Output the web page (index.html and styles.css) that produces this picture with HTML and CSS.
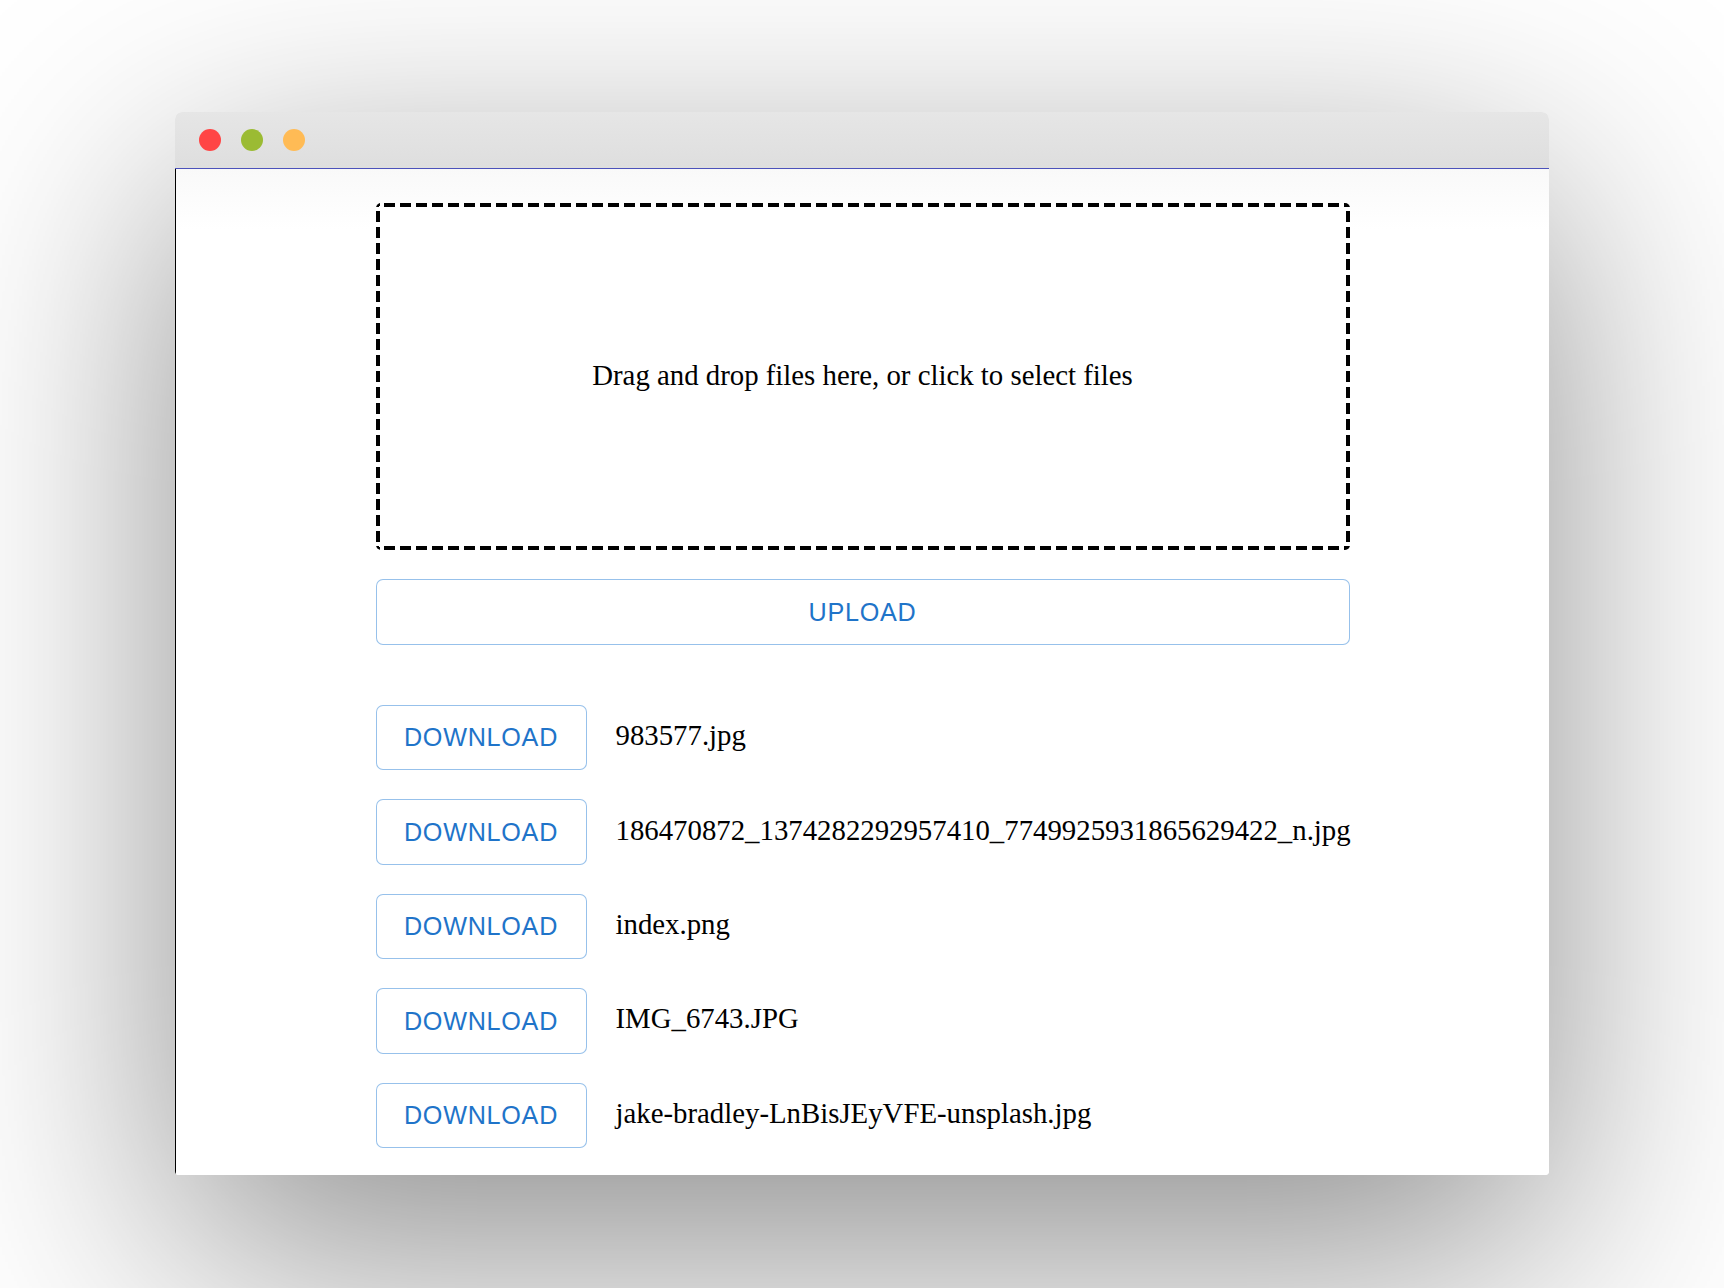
FILE: index.html
```html
<!DOCTYPE html>
<html>
<head>
<meta charset="utf-8">
<link rel="stylesheet" href="styles.css">
</head>
<body>
<div class="stage">
  <div class="window">
    <div class="titlebar">
      <span class="dot red"></span>
      <span class="dot green"></span>
      <span class="dot yellow"></span>
    </div>
    <div class="content">
      <div class="column">
        <div class="dropzone">Drag and drop files here, or click to select files</div>
        <button class="btn upload">UPLOAD</button>
        <ul class="files">
          <li class="row"><button class="btn">DOWNLOAD</button><span class="name">983577.jpg</span></li>
          <li class="row"><button class="btn">DOWNLOAD</button><span class="name">186470872_1374282292957410_7749925931865629422_n.jpg</span></li>
          <li class="row"><button class="btn">DOWNLOAD</button><span class="name">index.png</span></li>
          <li class="row"><button class="btn">DOWNLOAD</button><span class="name">IMG_6743.JPG</span></li>
          <li class="row"><button class="btn">DOWNLOAD</button><span class="name">jake-bradley-LnBisJEyVFE-unsplash.jpg</span></li>
        </ul>
      </div>
    </div>
  </div>
</div>
</body>
</html>
```
FILE: styles.css
```css
html, body {
  margin: 0;
  padding: 0;
}
body {
  width: 1724px;
  height: 1288px;
  overflow: hidden;
  background: #ffffff;
}
.stage {
  padding-top: 112px;
  padding-left: 175px;
}
.window {
  width: 1374px;
  height: 1063px;
  border-radius: 7px 7px 4px 4px;
  box-shadow: 0 80px 260px rgba(0, 0, 0, 0.45);
  background: #fff;
  display: flex;
  flex-direction: column;
  overflow: hidden;
}
.titlebar {
  height: 57px;
  flex: none;
  box-sizing: border-box;
  border-bottom: 1px solid #4c52bb;
  background: linear-gradient(to bottom, #e6e6e6, #dedede);
  display: flex;
  align-items: center;
  padding-left: 24px;
  padding-bottom: 1px;
  gap: 20px;
}
.dot {
  width: 22px;
  height: 22px;
  border-radius: 50%;
  display: block;
}
.red { background: #ff4545; }
.green { background: #9bbb33; }
.yellow { background: #ffbb55; }
.content {
  flex: 1;
  border-left: 1px solid #000;
  background: linear-gradient(to bottom, #f9f9f9 0, #ffffff 60px);
  overflow: hidden;
}
.column {
  width: 974px;
  margin: 34px auto 0;
}
.dropzone {
  box-sizing: border-box;
  height: 347px;
  padding-bottom: 3px;
  border-radius: 5px;
  background:
    repeating-linear-gradient(to right, #000 0 3px, transparent 3px 8px, #000 8px 16px) left top / 100% 4px no-repeat,
    repeating-linear-gradient(to right, #000 0 3px, transparent 3px 8px, #000 8px 16px) left bottom / 100% 4px no-repeat,
    repeating-linear-gradient(to bottom, #000 0 3px, transparent 3px 8px, #000 8px 16px) left top / 4px 100% no-repeat,
    repeating-linear-gradient(to bottom, #000 0 3px, transparent 3px 8px, #000 8px 16px) right top / 4px 100% no-repeat,
    #fff;
  display: flex;
  align-items: center;
  justify-content: center;
  font-family: "Liberation Serif", serif;
  font-size: 28.8px;
  color: #000;
}
.btn {
  box-sizing: border-box;
  height: 65.7px;
  padding: 0 27px;
  border: 1.8px solid rgba(25, 118, 210, 0.45);
  border-radius: 7px;
  background: #fff;
  color: #1f74c9;
  font-family: "Liberation Sans", Arial, sans-serif;
  font-size: 25.2px;
  letter-spacing: 0.02857em;
  font-weight: 400;
  line-height: 1.75;
  cursor: pointer;
}
.upload {
  display: block;
  width: 100%;
  margin-top: 29px;
}
.files {
  list-style: none;
  margin: 60px 0 0;
  padding: 0;
  display: flex;
  flex-direction: column;
  gap: 28.8px;
}
.row {
  display: flex;
  align-items: center;
  gap: 29px;
}
.row .btn {
  width: 211px;
  flex: none;
}
.name {
  font-family: "Liberation Serif", serif;
  font-size: 28.8px;
  color: #000;
  white-space: nowrap;
  margin-bottom: 4px;
}
```
